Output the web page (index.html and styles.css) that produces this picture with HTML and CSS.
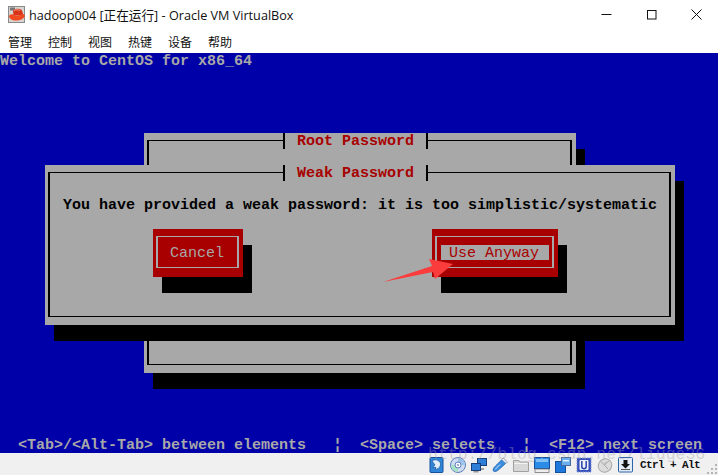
FILE: index.html
```html
<!DOCTYPE html>
<html lang="zh">
<head>
<meta charset="utf-8">
<title>hadoop004 [正在运行] - Oracle VM VirtualBox</title>
<link rel="stylesheet" href="styles.css">
</head>
<body>
<div class="app">
  <header class="titlebar">
    <svg class="logo" width="18" height="17" viewBox="0 0 18 17">
      <rect x="0.5" y="0.5" width="16" height="16" fill="#d8d4d0" stroke="#8a8a8a"/>
      <rect x="2" y="1.5" width="5" height="3" fill="#777"/>
      <path d="M5 4.5C7 2.5 11 2.5 13 3.5C14.500 4.500 15 7 15 9L5.500 9.500Z" fill="#d8341a"/>
      <path d="M1 11C1 8.500 3.500 8 5 8.500C8 10 12 9.500 15 8C17.500 8.500 17 11 15 12.500C11 15.500 3 15.500 1 11Z" fill="#f04a20"/>
      <path d="M6 4.500C8 3.500 10 3.500 12 4.500" stroke="#f8a080" fill="none"/>
    </svg>
    <span class="apptitle">hadoop004 [正在运行] - Oracle VM VirtualBox</span>
    <div class="winctl">
      <svg width="11" height="11" viewBox="0 0 11 11"><path d="M0.500 5.500H10.500" stroke="#111"/></svg>
      <svg width="11" height="11" viewBox="0 0 11 11"><rect x="1.500" y="1.500" width="8.500" height="8.500" fill="none" stroke="#111"/></svg>
      <svg width="11" height="11" viewBox="0 0 11 11"><path d="M0.500 0.500L10.500 10.500M10.500 0.500L0.500 10.500" stroke="#111"/></svg>
    </div>
  </header>
  <nav class="menubar">
    <span>管理</span><span>控制</span><span>视图</span><span>热键</span><span>设备</span><span>帮助</span>
  </nav>
  <main class="console">
    <div class="line">Welcome to CentOS for x86_64</div>
    <div class="line">  &lt;Tab&gt;/&lt;Alt-Tab&gt; between elements   ¦  &lt;Space&gt; selects   ¦  &lt;F12&gt; next screen</div>

    <section class="window window-back">
      <div class="frame frame-back">
        <div class="wintitle wintitle-back">Root Password</div>
      </div>
    </section>

    <section class="window window-front">
      <div class="frame frame-front">
        <div class="wintitle wintitle-front">Weak Password</div>
        <p class="message">You have provided a weak password: it is too simplistic/systematic</p>
        <div class="buttons">
          <div class="btn btn-cancel"><div class="btn-inner"><span class="label">Cancel</span></div></div>
          <div class="btn btn-use"><div class="btn-inner"><span class="label label-focus">Use Anyway</span></div></div>
        </div>
      </div>
    </section>

    <svg class="arrow" width="80" height="30" viewBox="0 0 80 30">
      <polygon points="3,24 52,8 49,1 73,6 55,21 53,14" fill="#fb3c3c"/>
    </svg>
  </main>
  <footer class="statusbar">
    <svg class="ico" viewBox="0 0 16 16"><rect x="1" y="0.500" width="13" height="15" rx="1" fill="#2f86d8" stroke="#14509c"/><path d="M3 4C7 1 12 4 11.500 8C11 11 8 12.500 6 12.500L7 10.500L3.500 10L6 8Z" fill="#dfeefa" stroke="#14509c" stroke-width="0.700"/></svg>
    <svg class="ico" viewBox="0 0 16 16"><circle cx="8" cy="8" r="7.500" fill="#cfdcf4" stroke="#5c7fb8"/><path d="M8 1A7 7 0 0 1 15 8L8 8Z" fill="#9cc8f0"/><path d="M8 15A7 7 0 0 1 1 8L8 8Z" fill="#a8e0c8"/><circle cx="8" cy="8" r="3" fill="#fff" stroke="#5c7fb8"/><circle cx="8" cy="8" r="1" fill="#7d98c8"/></svg>
    <svg class="ico" viewBox="0 0 16 16"><rect x="6.500" y="1.500" width="9" height="7" fill="#2f7fd8" stroke="#1a3f78"/><path d="M9 9.500V12H13" stroke="#555" fill="none"/><rect x="0.500" y="6.500" width="9" height="7" fill="#2f7fd8" stroke="#1a3f78"/><rect x="2.500" y="14" width="5" height="1.500" fill="#999"/></svg>
    <svg class="ico ico-usb" viewBox="0 0 16 16"><path d="M1 13.500C1 11 3 9.500 4.500 8L10 2.500L14 6L8 11.500C6 13.500 3 16 1 13.500Z" fill="#3a8ee0" stroke="#1a5aa8" stroke-width="0.800"/><path d="M11 0.800L15.500 5L14 6.500L9.500 2.500Z" fill="#e8eef5" stroke="#7a8aa0" stroke-width="0.700"/><path d="M3 12.500L8 7.500" stroke="#cfe6fb"/></svg>
    <svg class="ico" viewBox="0 0 16 16"><path d="M0.500 14.500V3.500H6L7 5H15.500V14.500Z" fill="#d8d8d8" stroke="#a0a0a0"/><rect x="1.500" y="6" width="13" height="1" fill="#f4f4f4"/></svg>
    <svg class="ico" viewBox="0 0 16 16"><rect x="0.500" y="0.500" width="15" height="11" fill="#2a8ce6" stroke="#14509c"/><rect x="2" y="2" width="12" height="3" fill="#80c0f4"/><rect x="1" y="12" width="14" height="3.500" fill="#eee" stroke="#777" stroke-width="0.800"/></svg>
    <svg class="ico" viewBox="0 0 16 16"><rect x="0.500" y="4.500" width="10" height="11" fill="#1f78dc" stroke="#14509c"/><rect x="6.500" y="0.500" width="9" height="8" fill="#6aaef0" stroke="#4a6a98"/><path d="M8 3H14V4.500H8Z" fill="#e0effc"/></svg>
    <svg class="ico" viewBox="0 0 16 16"><rect x="1" y="1" width="14" height="14" fill="#3550b8" stroke="#7f90d8" stroke-dasharray="1.500 1"/><rect x="3.500" y="3" width="9" height="10" rx="1" fill="#eef2fc"/><path d="M5.800 4V9.500A2.200 2.200 0 0 0 10.200 9.500V4" fill="none" stroke="#2a44a8" stroke-width="1.500"/></svg>
    <svg class="ico" viewBox="0 0 16 16"><ellipse cx="8" cy="8.500" rx="7" ry="6.500" transform="rotate(-40 8 8.500)" fill="#dcdcdc" stroke="#a8a8a8"/><path d="M4 4.500L11 12M8 7L12.500 3.500" stroke="#a8a8a8" fill="none"/><ellipse cx="8.500" cy="6.500" rx="1.200" ry="2" transform="rotate(45 8.500 6.500)" fill="#bbb"/></svg>
    <svg class="ico" viewBox="0 0 16 16"><rect x="0.500" y="0.500" width="14" height="14.500" rx="1" fill="#e4ecf6" stroke="#2a63a8"/><path d="M5.500 3H9.500V7H12L7.500 11.500L3 7H5.500Z" fill="#111"/><rect x="3" y="12" width="9" height="1" fill="#555"/></svg>
    <span class="hostkey">Ctrl + Alt</span>
    <svg class="grip" width="11" height="11" viewBox="0 0 11 11"><g fill="#b4b4b4"><rect x="8" y="0" width="2" height="2"/><rect x="4" y="4" width="2" height="2"/><rect x="8" y="4" width="2" height="2"/><rect x="0" y="8" width="2" height="2"/><rect x="4" y="8" width="2" height="2"/><rect x="8" y="8" width="2" height="2"/></g></svg>
  </footer>
  <div class="watermark">http://blog.csdn.net/liuge36</div>
</div>
</body>
</html>
```
FILE: styles.css
```css
* { box-sizing: border-box; }
html, body { margin: 0; padding: 0; }
body { background: #fff; overflow: hidden; }

.app {
  position: relative;
  width: 718px;
  height: 475px;
  display: flex;
  flex-direction: column;
  overflow: hidden;
}

.titlebar {
  height: 30px;
  display: flex;
  align-items: center;
  padding-left: 8px;
  background: #fff;
}
.logo { flex: none; margin-top: -1px; }
.apptitle {
  margin-left: 3px;
  font: 12.65px/18px "Open Sans", "Noto Sans CJK SC", sans-serif;
  color: #111;
  white-space: nowrap;
  margin-top: -1px;
}
.winctl {
  margin-left: auto;
  display: flex;
  gap: 34px;
  padding-right: 16px;
  margin-top: -2px;
}

.menubar {
  height: 23px;
  display: flex;
  gap: 16px;
  padding-left: 8px;
  background: #fff;
  font: 12px/23px "Noto Sans CJK SC", sans-serif;
  color: #111;
}

.console {
  position: relative;
  height: 400px;
  background: #0000a8;
  display: flex;
  flex-direction: column;
  justify-content: space-between;
  color: #a8a8a8;
  font: bold 15px/18px "Liberation Mono", monospace;
}
.line { height: 16px; white-space: pre; }

.window {
  position: absolute;
  background: #a8a8a8;
  box-shadow: 9px 16px 0 #000;
}
.window-back { left: 144px; top: 80px; width: 432px; height: 240px; }
.window-front { left: 45px; top: 112px; width: 630px; height: 160px; }

.frame {
  height: 100%;
  border: solid #000;
  border-width: 1px 2px;
}
.frame-back { margin: 7px 4px 0 3px; height: 225px; }
.frame-front { margin: 7px 4px 0 3px; height: 145px; }

.wintitle {
  width: 145px;
  height: 16px;
  margin-top: -8px;
  padding-left: 12px;
  background: #a8a8a8;
  border: solid #000;
  border-width: 0 2px;
  color: #a80000;
  white-space: pre;
}
.wintitle-back { margin-left: 134px; }
.wintitle-front { margin-left: 233px; }

.message {
  margin: 16px 0 0 13px;
  color: #000;
  white-space: pre;
  height: 16px;
}

.buttons {
  display: flex;
  gap: 189px;
  margin: 16px 0 0 103px;
}
.btn {
  height: 48px;
  background: #a80000;
  box-shadow: 9px 16px 0 #000;
  padding: 7px 4px 9px 3px;
}
.btn-cancel { width: 90px; }
.btn-use { width: 126px; }
.btn-inner {
  height: 32px;
  border: solid #a8a8a8;
  border-width: 1px 2px;
  padding: 8px 0 0 12px;
  display: flex;
  font-weight: normal;
}
.btn-use .btn-inner { padding: 8px 0 0 4px; }
.label { white-space: pre; height: 16px; }
.label-focus {
  width: 108px;
  padding-left: 8px;
  background: #a8a8a8;
  color: #a80000;
  line-height: 17px;
  height: 15px;
}

.arrow { position: absolute; left: 380px; top: 205px; }

.statusbar {
  height: 22px;
  display: flex;
  align-items: center;
  justify-content: flex-end;
  gap: 5px;
  background: #f0f0f0;
  padding-right: 7px;
  position: relative;
}
.ico { width: 16px; height: 16px; flex: none; margin-top: 2px; }
.hostkey {
  margin-left: 1px;
  margin-right: 11px;
  font: bold 11px/14px "Liberation Mono", monospace;
  letter-spacing: -0.6px;
  color: #111;
  white-space: pre;
  margin-top: 1px;
}
.grip { position: absolute; right: 0; bottom: 0; }

.watermark {
  position: absolute;
  left: 428px;
  top: 446px;
  font: 16.5px/18px "Liberation Mono", monospace;
  color: rgba(165, 165, 175, 0.4);
  white-space: pre;
}
```
